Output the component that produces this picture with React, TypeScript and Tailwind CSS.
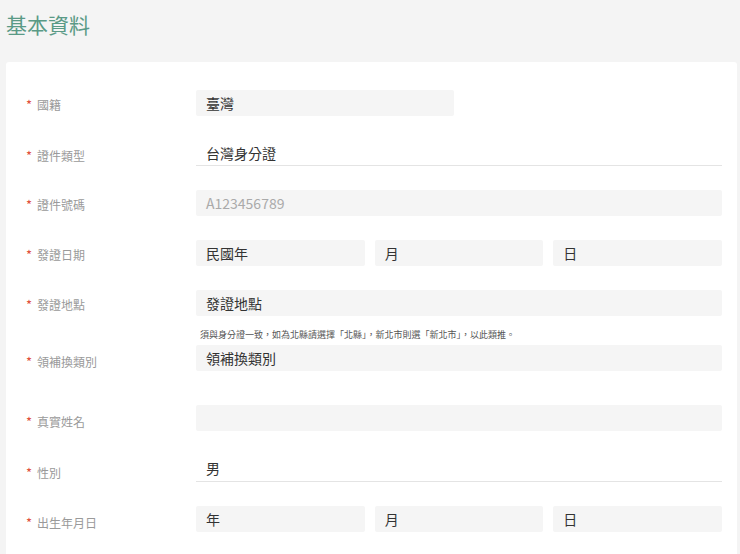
const F = { fontFamily: '"Noto Sans CJK TC","Noto Sans",sans-serif' };

function Label({ t, className = "" }: { t: string; className?: string }) {
  return (
    <div className={"w-[190px] shrink-0 pl-[20px] text-[12px] text-[#9a9a9a] flex items-center gap-[5px] " + className}>
      <span className="text-[#e0503c] text-[13px]">*</span>
      <span>{t}</span>
    </div>
  );
}

const box = "h-[26px] bg-[#f5f5f5] rounded-[2px] flex items-center px-[10px] text-[14px] text-[#333]";
const line = "h-[26px] border-b border-[#e4e4e4] flex items-center px-[10px] text-[14px] text-[#333]";

export default function App() {
  return (
    <div className="w-[740px] h-[554px] bg-[#f4f4f4] overflow-hidden" style={F}>
      <div className="h-[62px] pl-[6px] pt-[9px] text-[21px] text-[#5a9a86]">基本資料</div>
      <div className="mx-[6px] mr-[3px] bg-white rounded-[3px] pr-[15px] pt-[28px] h-[520px]">
        <div className="flex h-[26px]">
          <Label t="國籍" className="pt-[4px]" />
          <div className={box + " w-[258px]"}>臺灣</div>
        </div>
        <div className="flex h-[24px] mt-[26px]">
          <Label t="證件類型" className="pt-[4px]" />
          <div className={line + " flex-1 !h-[24px]"}>台灣身分證</div>
        </div>
        <div className="flex h-[26px] mt-[24px]">
          <Label t="證件號碼" className="pt-[4px]" />
          <div className={box + " flex-1 !text-[#aaa]"}>A123456789</div>
        </div>
        <div className="flex h-[26px] mt-[24px]">
          <Label t="發證日期" className="pt-[4px]" />
          <div className="flex-1 flex gap-[10px]">
            <div className={box + " flex-1"}>民國年</div>
            <div className={box + " flex-1"}>月</div>
            <div className={box + " flex-1"}>日</div>
          </div>
        </div>
        <div className="flex mt-[24px]">
          <Label t="發證地點" className="h-[26px] pt-[4px]" />
          <div className="flex-1">
            <div className={box}>發證地點</div>
            <div className="text-[9px] text-[#555] pl-[4px] mt-[12px] h-[14px]">須與身分證一致，如為北縣請選擇「北縣」，新北市則選「新北市」，以此類推。</div>
          </div>
        </div>
        <div className="flex mt-[3px]">
          <Label t="領補換類別" className="h-[26px] mt-[4px]" />
          <div className={box + " flex-1 !items-start pt-[3px]"}>領補換類別</div>
        </div>
        <div className="flex h-[26px] mt-[30px]">
          <Label t="真實姓名" className="pt-[8px]" />
          <div className={box + " flex-1"}></div>
        </div>
        <div className="flex h-[26px] mt-[25px]">
          <Label t="性別" className="pt-[8px]" />
          <div className={line + " flex-1"}>男</div>
        </div>
        <div className="flex h-[26px] mt-[24px]">
          <Label t="出生年月日" className="pt-[8px]" />
          <div className="flex-1 flex gap-[10px]">
            <div className={box + " flex-1"}>年</div>
            <div className={box + " flex-1"}>月</div>
            <div className={box + " flex-1"}>日</div>
          </div>
        </div>
      </div>
    </div>
  );
}
